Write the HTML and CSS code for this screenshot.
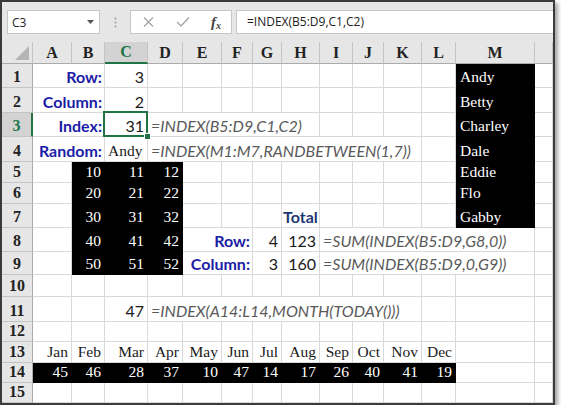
FILE: index.html
```html
<!DOCTYPE html>
<html lang="en">
<head>
    <meta charset="UTF-8">
    <title>INDEX examples</title>
    <link rel="stylesheet" href="styles.css">
</head>
<body>

    <div class="window">
        <div class="formula-bar">
            <div class="name-box">
                <span>C3</span>
                <svg class="drop" width="7" height="4" viewBox="0 0 7 4"><path d="M0 0h7L3.5 4z" fill="#555"/></svg>
            </div>
            <svg class="grip" width="3" height="11" viewBox="0 0 3 11"><circle cx="1.5" cy="1.5" r="1" fill="#9c9c9c"/><circle cx="1.5" cy="5.5" r="1" fill="#9c9c9c"/><circle cx="1.5" cy="9.5" r="1" fill="#9c9c9c"/></svg>
            <div class="fx-box">
                <svg width="11" height="10" viewBox="0 0 11 10"><path d="M1 0.5l9 9M10 0.5l-9 9" stroke="#a5a5a5" stroke-width="1.3" fill="none"/></svg>
                <svg width="14" height="10" viewBox="0 0 14 10"><path d="M1 5l4 4 8-8.5" stroke="#a5a5a5" stroke-width="1.4" fill="none"/></svg>
                <span class="fx">f<small>x</small></span>
            </div>
            <div class="formula-input">=INDEX(B5:D9,C1,C2)</div>
        </div>

        <div class="sheet">
            <div class="row head">
                <div class="cell corner"><span class="tri"></span></div>
                <div class="cell">A</div><div class="cell">B</div><div class="cell on">C</div><div class="cell">D</div>
                <div class="cell">E</div><div class="cell">F</div><div class="cell">G</div><div class="cell">H</div>
                <div class="cell">I</div><div class="cell">J</div><div class="cell">K</div><div class="cell">L</div>
                <div class="cell">M</div><div class="cell"></div>
            </div>

            <div class="row h24">
                <div class="cell rh">1</div>
                <div class="cell s2 r lbl">Row:</div><div class="cell r num">3</div>
                <div class="cell"></div><div class="cell"></div><div class="cell"></div><div class="cell"></div><div class="cell"></div>
                <div class="cell"></div><div class="cell"></div><div class="cell"></div><div class="cell"></div>
                <div class="cell blk name">Andy</div><div class="cell"></div>
            </div>

            <div class="row h25">
                <div class="cell rh">2</div>
                <div class="cell s2 r lbl">Column:</div><div class="cell r num">2</div>
                <div class="cell"></div><div class="cell"></div><div class="cell"></div><div class="cell"></div><div class="cell"></div>
                <div class="cell"></div><div class="cell"></div><div class="cell"></div><div class="cell"></div>
                <div class="cell blk name">Betty</div><div class="cell"></div>
            </div>

            <div class="row h24">
                <div class="cell rh on">3</div>
                <div class="cell s2 r lbl">Index:</div><div class="cell r num sel">31</div>
                <div class="cell s5 fml">=INDEX(B5:D9,C1,C2)</div>
                <div class="cell"></div><div class="cell"></div><div class="cell"></div><div class="cell"></div>
                <div class="cell blk name">Charley</div><div class="cell"></div>
            </div>

            <div class="row h25">
                <div class="cell rh">4</div>
                <div class="cell s2 r lbl">Random:</div><div class="cell serif">Andy</div>
                <div class="cell s8 fml">=INDEX(M1:M7,RANDBETWEEN(1,7))</div>
                <div class="cell"></div>
                <div class="cell blk name">Dale</div><div class="cell"></div>
            </div>

            <div class="row h21">
                <div class="cell rh">5</div><div class="cell"></div>
                <div class="cell blk r">10</div><div class="cell blk r">11</div><div class="cell blk r">12</div>
                <div class="cell"></div><div class="cell"></div><div class="cell"></div><div class="cell"></div>
                <div class="cell"></div><div class="cell"></div><div class="cell"></div><div class="cell"></div>
                <div class="cell blk name">Eddie</div><div class="cell"></div>
            </div>

            <div class="row h21">
                <div class="cell rh">6</div><div class="cell"></div>
                <div class="cell blk r">20</div><div class="cell blk r">21</div><div class="cell blk r">22</div>
                <div class="cell"></div><div class="cell"></div><div class="cell"></div><div class="cell"></div>
                <div class="cell"></div><div class="cell"></div><div class="cell"></div><div class="cell"></div>
                <div class="cell blk name">Flo</div><div class="cell"></div>
            </div>

            <div class="row h24">
                <div class="cell rh">7</div><div class="cell"></div>
                <div class="cell blk r">30</div><div class="cell blk r">31</div><div class="cell blk r">32</div>
                <div class="cell"></div><div class="cell"></div><div class="cell"></div>
                <div class="cell total">Total</div>
                <div class="cell"></div><div class="cell"></div><div class="cell"></div><div class="cell"></div>
                <div class="cell blk name">Gabby</div><div class="cell"></div>
            </div>

            <div class="row h24">
                <div class="cell rh">8</div><div class="cell"></div>
                <div class="cell blk r">40</div><div class="cell blk r">41</div><div class="cell blk r">42</div>
                <div class="cell s2 r lbl">Row:</div>
                <div class="cell r num">4</div><div class="cell r num">123</div>
                <div class="cell s5 fml">=SUM(INDEX(B5:D9,G8,0))</div>
                <div class="cell"></div>
            </div>

            <div class="row h23">
                <div class="cell rh">9</div><div class="cell"></div>
                <div class="cell blk r">50</div><div class="cell blk r">51</div><div class="cell blk r">52</div>
                <div class="cell s2 r lbl">Column:</div>
                <div class="cell r num">3</div><div class="cell r num">160</div>
                <div class="cell s5 fml">=SUM(INDEX(B5:D9,0,G9))</div>
                <div class="cell"></div>
            </div>

            <div class="row h22">
                <div class="cell rh">10</div>
                <div class="cell"></div><div class="cell"></div><div class="cell"></div><div class="cell"></div><div class="cell"></div>
                <div class="cell"></div><div class="cell"></div><div class="cell"></div><div class="cell"></div><div class="cell"></div>
                <div class="cell"></div><div class="cell"></div><div class="cell"></div><div class="cell"></div>
            </div>

            <div class="row h25">
                <div class="cell rh">11</div>
                <div class="cell"></div><div class="cell"></div><div class="cell r num">47</div>
                <div class="cell s8 fml">=INDEX(A14:L14,MONTH(TODAY()))</div>
                <div class="cell"></div><div class="cell"></div><div class="cell"></div>
            </div>

            <div class="row h20">
                <div class="cell rh">12</div>
                <div class="cell"></div><div class="cell"></div><div class="cell"></div><div class="cell"></div><div class="cell"></div>
                <div class="cell"></div><div class="cell"></div><div class="cell"></div><div class="cell"></div><div class="cell"></div>
                <div class="cell"></div><div class="cell"></div><div class="cell"></div><div class="cell"></div>
            </div>

            <div class="row h21">
                <div class="cell rh">13</div>
                <div class="cell serif r">Jan</div><div class="cell serif r">Feb</div><div class="cell serif r">Mar</div>
                <div class="cell serif r">Apr</div><div class="cell serif r">May</div><div class="cell serif r">Jun</div>
                <div class="cell serif r">Jul</div><div class="cell serif r">Aug</div><div class="cell serif r">Sep</div>
                <div class="cell serif r">Oct</div><div class="cell serif r">Nov</div><div class="cell serif r">Dec</div>
                <div class="cell"></div><div class="cell"></div>
            </div>

            <div class="row h20">
                <div class="cell rh">14</div>
                <div class="cell blk r">45</div><div class="cell blk r">46</div><div class="cell blk r">28</div>
                <div class="cell blk r">37</div><div class="cell blk r">10</div><div class="cell blk r">47</div>
                <div class="cell blk r">14</div><div class="cell blk r">17</div><div class="cell blk r">26</div>
                <div class="cell blk r">40</div><div class="cell blk r">41</div><div class="cell blk r">19</div>
                <div class="cell"></div><div class="cell"></div>
            </div>

            <div class="row h20">
                <div class="cell rh">15</div>
                <div class="cell"></div><div class="cell"></div><div class="cell"></div><div class="cell"></div><div class="cell"></div>
                <div class="cell"></div><div class="cell"></div><div class="cell"></div><div class="cell"></div><div class="cell"></div>
                <div class="cell"></div><div class="cell"></div><div class="cell"></div><div class="cell"></div>
            </div>
        </div>
    </div>

</body>
</html>
```

FILE: styles.css
```css
body {
    margin: 0;
    background: #fff;
    font-family: Lato, "Open Sans", sans-serif;
}

.window {
    width: 551px;
    border: 2px solid #3b3b3b;
    background: #fff;
    box-shadow: 3px 3px 4px rgba(0, 0, 0, 0.35);
}

/* formula bar */

.formula-bar {
    display: flex;
    align-items: center;
    height: 40px;
    padding-left: 5px;
    background: #e6e6e6;
    font-family: "Open Sans", sans-serif;
    font-size: 12px;
    color: #222;
}

.name-box {
    display: flex;
    align-items: center;
    justify-content: space-between;
    box-sizing: border-box;
    width: 93px;
    height: 24px;
    padding: 0 5px 0 4px;
    background: #fff;
    border: 1px solid #c6c6c6;
}

.grip {
    margin: 0 13px 0 14px;
}

.fx-box {
    display: flex;
    align-items: center;
    box-sizing: border-box;
    width: 102px;
    height: 24px;
    padding-left: 12px;
    background: #fff;
    border: 1px solid #c6c6c6;
}

.fx-box svg:nth-child(2) {
    margin-left: 22px;
}

.fx {
    margin-left: 21px;
    font-family: "Liberation Serif", serif;
    font-style: italic;
    font-weight: bold;
    font-size: 15px;
    color: #444;
}

.fx small {
    font-size: 10px;
    position: relative;
    top: 2px;
}

.formula-input {
    flex: 1;
    box-sizing: border-box;
    height: 24px;
    margin-left: 4px;
    padding-left: 10px;
    line-height: 22px;
    background: #fff;
    border: 1px solid #c6c6c6;
    border-right: none;
}

/* grid */

.row {
    display: grid;
    grid-template-columns: 31px 39px 33px 43px 35px 39px 31px 29px 38px 33px 31px 38px 34px 79px 18px;
}

.h20 { height: 20px; }
.h21 { height: 21px; }
.h22 { height: 22px; }
.h23 { height: 23px; }
.h24 { height: 24px; }
.h25 { height: 25px; }

.cell {
    display: flex;
    align-items: flex-end;
    box-sizing: border-box;
    min-width: 0;
    padding: 0 3px 1px;
    border-right: 1px solid #d9d9d9;
    border-bottom: 1px solid #d9d9d9;
    font-size: 16px;
    line-height: 18px;
    white-space: nowrap;
    color: #1a1a1a;
}

.s2 { grid-column: span 2; }
.s5 { grid-column: span 5; }
.s8 { grid-column: span 8; }

.r {
    justify-content: flex-end;
}

.head {
    height: 22px;
    background: #e6e6e6;
}

.head .cell,
.rh {
    justify-content: center;
    background: #e6e6e6;
    border-right-color: #c4c4c4;
    border-bottom-color: #c4c4c4;
    font-family: "Liberation Serif", serif;
    font-weight: bold;
    color: #222;
}

.head .cell {
    border-bottom-color: #ababab;
}

.rh {
    border-right-color: #ababab;
}

.head .on {
    background: #d3d3d3;
    color: #217346;
    border-bottom: 2px solid #217346;
}

.rh.on {
    background: #d3d3d3;
    color: #217346;
    border-right: 2px solid #217346;
}

.corner {
    justify-content: flex-end !important;
    padding: 0 3px 3px 0;
}

.tri {
    width: 0;
    height: 0;
    border-left: 14px solid transparent;
    border-bottom: 14px solid #b5b5b5;
}

.lbl {
    font-weight: bold;
    color: #1c1ca6;
    padding-right: 2px;
}

.total {
    font-weight: bold;
    color: #1d3a74;
    padding-left: 1px;
}

.fml {
    font-style: italic;
    color: #5a5a5a;
    padding-left: 3px;
}

.serif,
.blk {
    font-family: "Liberation Serif", serif;
    font-size: 15.5px;
}

.blk {
    background: #000;
    color: #fff;
    border-color: #000;
}

.name {
    padding-left: 4px;
}

.sel {
    position: relative;
}

.sel::after {
    content: "";
    position: absolute;
    left: -2px;
    top: -2px;
    right: -1px;
    bottom: -1px;
    border: 2px solid #217346;
}

.sel::before {
    content: "";
    position: absolute;
    right: -4px;
    bottom: -4px;
    width: 5px;
    height: 5px;
    background: #217346;
    border: 1px solid #fff;
    z-index: 1;
}
```
